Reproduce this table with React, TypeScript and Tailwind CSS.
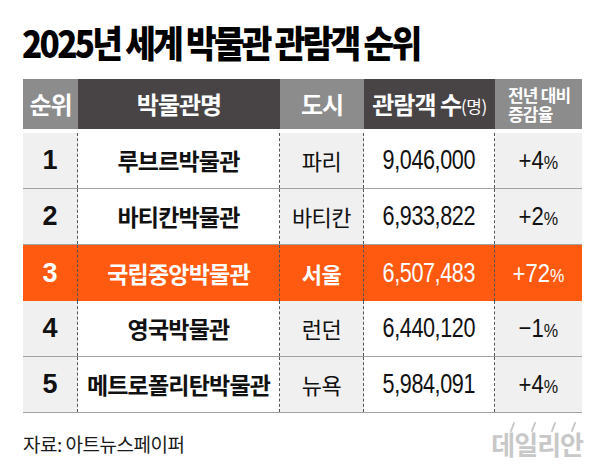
import React from 'react';

const KR = '"Noto Sans CJK KR", "Noto Sans", sans-serif';
const NUM = '"Liberation Sans", "Noto Sans CJK KR", sans-serif';

type Row = { rank: string; name: string; city: string; visitors: string; change: string; highlight?: boolean };

const rows: Row[] = [
  { rank: '1', name: '루브르박물관', city: '파리', visitors: '9,046,000', change: '+4' },
  { rank: '2', name: '바티칸박물관', city: '바티칸', visitors: '6,933,822', change: '+2' },
  { rank: '3', name: '국립중앙박물관', city: '서울', visitors: '6,507,483', change: '+72', highlight: true },
  { rank: '4', name: '영국박물관', city: '런던', visitors: '6,440,120', change: '−1' },
  { rank: '5', name: '메트로폴리탄박물관', city: '뉴욕', visitors: '5,984,091', change: '+4' },
];

const dash = 'border-r border-dashed border-[#555]';

function BodyRow({ row }: { row: Row }) {
  const hl = row.highlight;
  const text = hl ? 'text-white' : 'text-[#111]';
  const gray = hl ? 'bg-[#ff5a10]' : 'bg-[#f0f0f0]';
  const white = hl ? 'bg-[#ff5a10]' : 'bg-white';
  return (
    <div className={`grid grid-cols-[55px_202px_84px_131px_87px] h-[56px] ${hl ? '' : 'border-b border-[#a3a3a3]'} ${text}`}>
      <div className={`${gray} ${dash} flex items-center justify-center text-[27px] font-bold`} style={{ fontFamily: NUM }}>
        {row.rank}
      </div>
      <div className={`${white} ${dash} flex items-center justify-center text-[23px] font-bold tracking-[-0.8px]`} style={{ fontFamily: KR }}>
        {row.name}
      </div>
      <div className={`${gray} ${dash} flex items-center justify-center text-[22px] tracking-[-0.5px] ${hl ? 'font-bold' : ''}`} style={{ fontFamily: KR }}>
        {row.city}
      </div>
      <div className={`${white} ${dash} flex items-center justify-center`} style={{ fontFamily: NUM }}>
        <span className="inline-block text-[27px] scale-x-[0.8] tracking-[-0.5px]">{row.visitors}</span>
      </div>
      <div className={`${gray} flex items-center justify-center`} style={{ fontFamily: NUM }}>
        <span className="inline-flex items-baseline scale-x-[0.85]">
          <span className="text-[26px]">{row.change}</span>
          <span className="text-[19px]">%</span>
        </span>
      </div>
    </div>
  );
}

export default function App() {
  return (
    <div className="w-[600px] h-[475px] bg-white relative overflow-hidden">
      <div className="pl-[22px] pt-[21px] h-[79px]">
        <h1
          className="inline-block origin-left scale-x-[0.9] text-[37px] font-black leading-[42px] text-black tracking-[-3px] whitespace-nowrap"
          style={{ fontFamily: KR }}
        >
          2025년 세계 박물관 관람객 순위
        </h1>
      </div>

      <div className="ml-[23px] w-[559px]">
        <div className="grid grid-cols-[55px_202px_84px_131px_87px] h-[50px] text-white font-bold" style={{ fontFamily: KR }}>
          <div className="bg-[#8c8c8c] flex items-center justify-center text-[24px] tracking-[-1px]">순위</div>
          <div className="bg-[#484446] flex items-center justify-center text-[24px] tracking-[-1px]">박물관명</div>
          <div className="bg-[#8c8c8c] flex items-center justify-center text-[24px] tracking-[-1px]">도시</div>
          <div className="bg-[#484446] flex items-center justify-center text-[24px] tracking-[-1px]">
            관람객 수<span className="text-[17px] font-normal mt-[4px] tracking-[-0.5px]">(명)</span>
          </div>
          <div className="bg-[#8c8c8c] flex flex-col justify-center pl-[13px] text-[17px] leading-[19px] tracking-[-0.8px]">
            <span className="block">전년 대비</span>
            <span className="block">증감율</span>
          </div>
        </div>
        <div className="h-[4px]" />
        {rows.map((r) => (
          <BodyRow key={r.rank} row={r} />
        ))}
      </div>

      <div className="flex items-center justify-between pl-[23px] pr-[17px] mt-[16px]">
        <span className="text-[19px] text-[#1a1a1a] tracking-[-0.5px]" style={{ fontFamily: KR }}>
          자료: 아트뉴스페이퍼
        </span>
        <span className="relative text-[26px] font-bold text-[#c8c8c8] tracking-[-1px] leading-[30px]" style={{ fontFamily: KR }}>
          데일리안
          <svg className="absolute left-0 top-[-8px]" width="90" height="12" viewBox="0 0 90 12">
            <g stroke="#c8c8c8" strokeWidth="2" strokeLinecap="round">
              <line x1="20" y1="10" x2="23" y2="2" />
              <line x1="41" y1="10" x2="44" y2="2" />
              <line x1="61" y1="10" x2="64" y2="2" />
              <line x1="81" y1="10" x2="84" y2="2" />
            </g>
          </svg>
        </span>
      </div>
    </div>
  );
}
